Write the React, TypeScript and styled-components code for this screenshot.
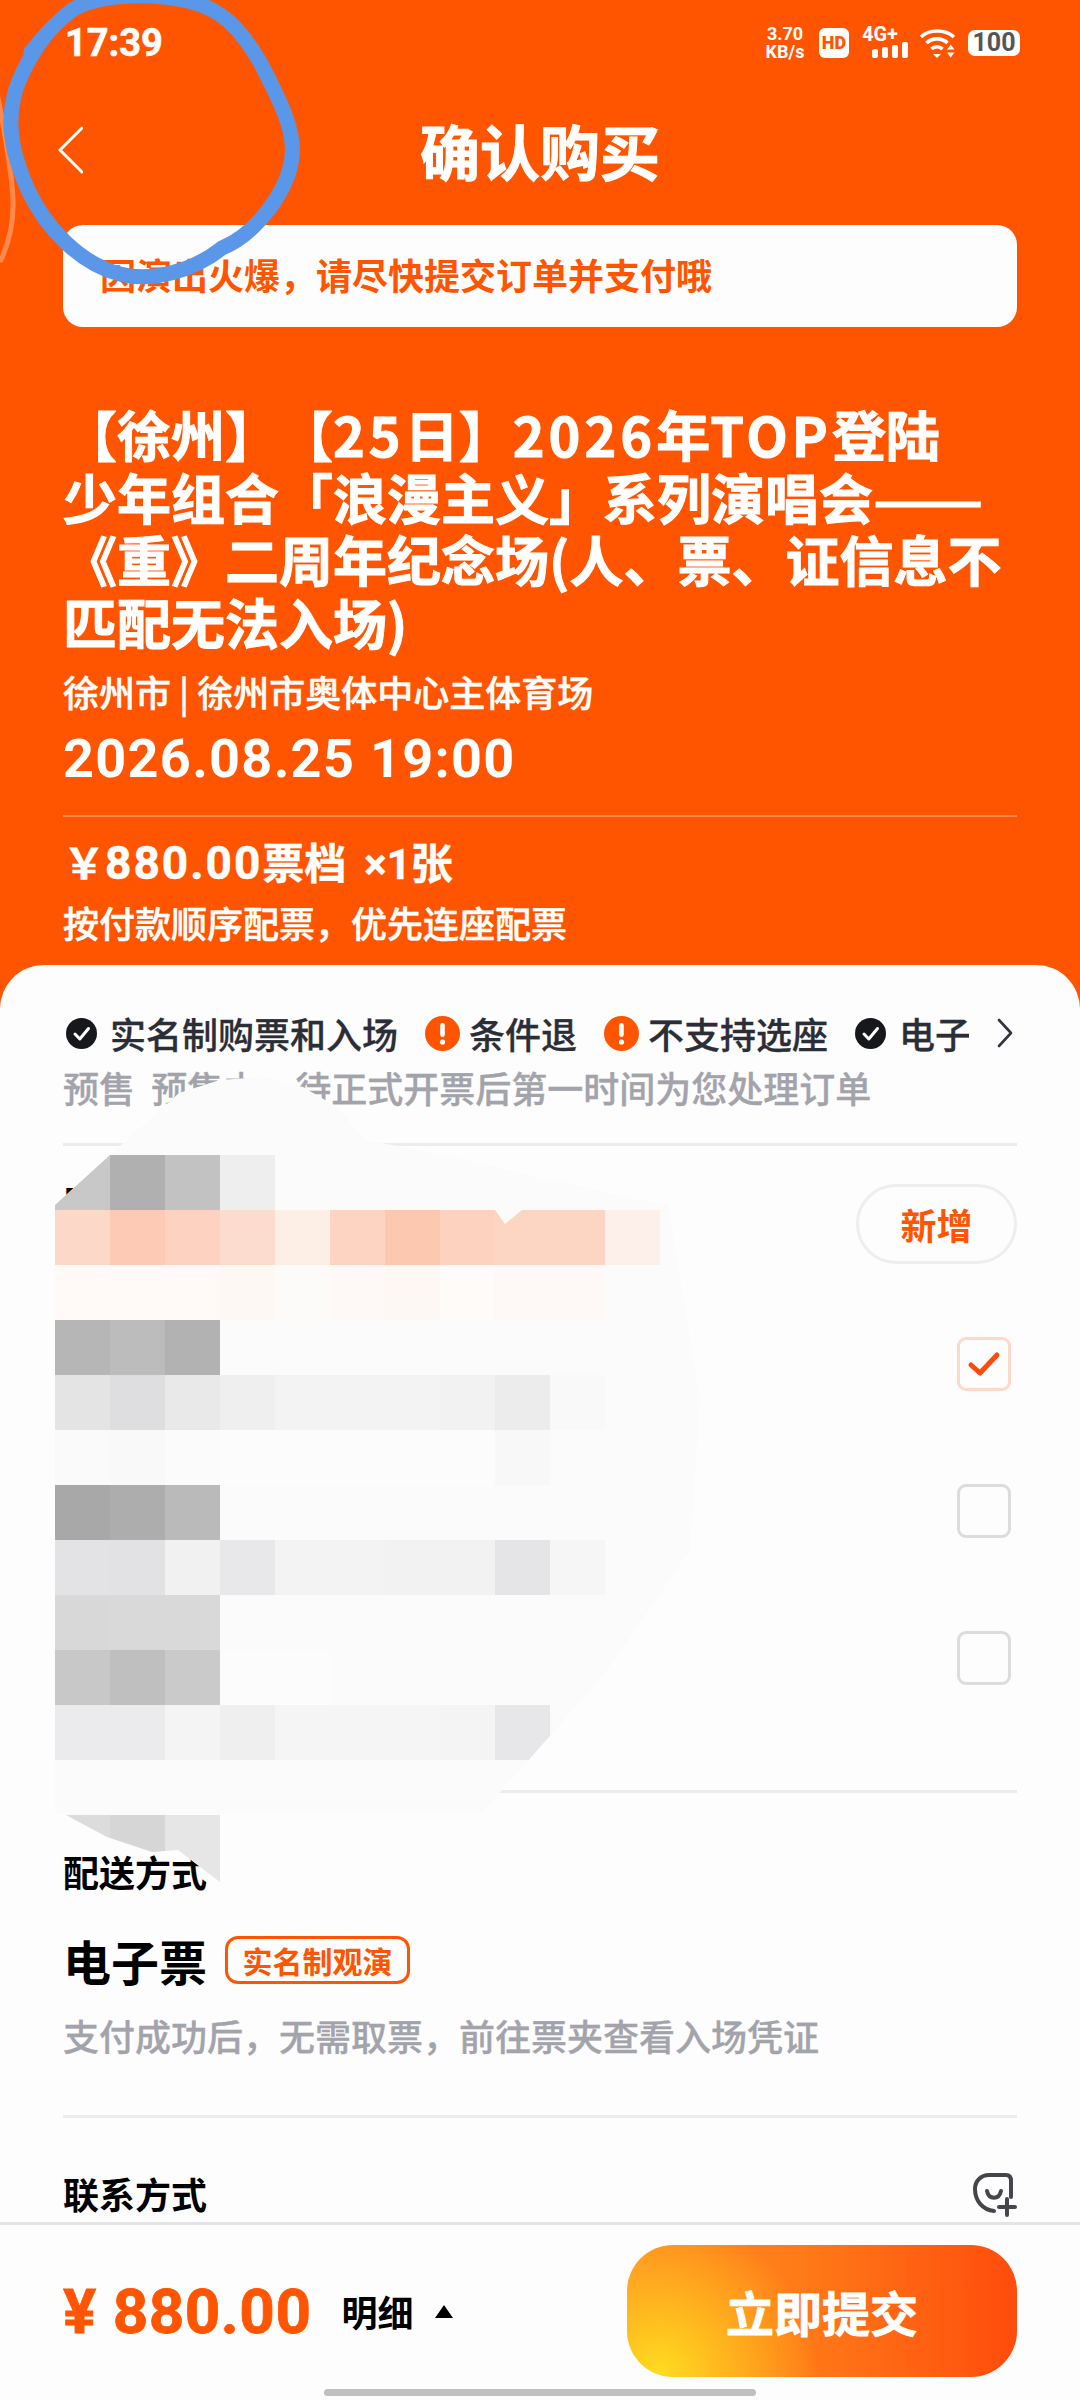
import React from "react";
import styled, { createGlobalStyle } from "styled-components";

const ORANGE = "#ff5500";
const CJK = `"Noto Sans CJK SC", "Noto Sans", sans-serif`;

const Global = createGlobalStyle`
  html, body { margin: 0; padding: 0; background: ${ORANGE}; }
  * { box-sizing: border-box; }
`;

const Page = styled.div`
  position: relative;
  width: 1080px;
  height: 2400px;
  overflow: hidden;
  display: flex;
  flex-direction: column;
  background: ${ORANGE};
  color: #fff;
  font-family: ${CJK};
  text-spacing-trim: space-all;
`;

const StatusBar = styled.div`
  height: 85px;
  padding: 0 60px 0 65px;
  display: flex;
  align-items: center;
  justify-content: space-between;
`;
const Time = styled.span`
  font: 700 38px Roboto, sans-serif;
  -webkit-text-stroke: 0.6px #fff;
`;
const StatusIcons = styled.div`
  display: flex;
  align-items: center;
  gap: 11px;
`;
const Speed = styled.div`
  display: flex;
  flex-direction: column;
  align-items: center;
  width: 46px;
  font: 700 18px/18px Roboto, sans-serif;
`;
const HdBadge = styled.span`
  width: 30px;
  height: 30px;
  border-radius: 6px;
  background: #fff;
  color: ${ORANGE};
  font: 900 18px/30px Roboto, sans-serif;
  text-align: center;
`;
const Signal = styled.div`
  display: flex;
  flex-direction: column;
  width: 46px;
  margin-left: 2px;
  font: 700 20px/15px Roboto, sans-serif;
`;
const Bars = styled.div`
  display: flex;
  align-items: flex-end;
  justify-content: flex-end;
  gap: 4px;
  height: 16px;
`;
const Bar = styled.i<{ $h: number }>`
  width: 6px;
  height: ${(p) => p.$h}px;
  border-radius: 2px;
  background: #fff;
`;
const Battery = styled.div`
  width: 52px;
  height: 26px;
  border-radius: 7px;
  background: #fff;
  color: #555;
  font: 700 25px/26px Roboto, sans-serif;
  text-align: center;
`;

const NavBar = styled.div`
  height: 132px;
  padding: 0 58px 3px;
  display: grid;
  grid-template-columns: 1fr auto 1fr;
  align-items: center;
`;
const Title = styled.h1`
  margin: 0;
  font-size: 60px;
  font-weight: 700;
  line-height: 70px;
  -webkit-text-stroke: 1px #fff;
`;

const Banner = styled.div`
  height: 102px;
  margin: 8px 63px 0;
  padding: 0 0 4px 37px;
  display: flex;
  align-items: center;
  border-radius: 20px;
  background: #fdfdfd;
  color: ${ORANGE};
  font-size: 36px;
  font-weight: 700;
`;

const Info = styled.div`
  margin: 76px 63px 0;
  display: flex;
  flex-direction: column;
`;
const Heading = styled.h2`
  margin: 0 -10px 0 0;
  font-size: 54px;
  font-weight: 700;
  line-height: 62.5px;
  -webkit-text-stroke: 1px #fff;
`;
const Latin = styled.span`
  letter-spacing: 4px;
`;
const Dash = styled.span`
  display: inline-block;
  transform: scaleX(1.2);
  transform-origin: left center;
`;
const Venue = styled.div`
  margin-top: 13px;
  font-size: 36px;
  font-weight: 500;
  line-height: 50px;
  -webkit-text-stroke: 0.5px #fff;
`;
const DateLine = styled.div`
  margin-top: 13px;
  font: 700 54px/60px Roboto, sans-serif;
  letter-spacing: 1.3px;
`;
const InfoRule = styled.div`
  height: 2px;
  margin: 26px 0 16px;
  background: rgba(255, 255, 255, 0.3);
`;
const PriceLine = styled.div`
  display: flex;
  align-items: baseline;
  height: 56px;
  font-size: 42px;
  font-weight: 700;
  line-height: 56px;
  -webkit-text-stroke: 0.5px #fff;
`;
const PriceDigits = styled.span`
  font: 700 46px/56px Roboto, sans-serif;
  letter-spacing: 2px;
`;
const PriceCount = styled.span`
  margin-left: 18px;
  font-family: Roboto, ${CJK};
`;
const SeatNote = styled.div`
  margin-top: 8px;
  font-size: 36px;
  font-weight: 500;
  line-height: 50px;
  -webkit-text-stroke: 0.5px #fff;
`;

const Panel = styled.div`
  flex: 1;
  min-height: 0;
  margin-top: 18px;
  padding: 46px 63px 0;
  overflow: hidden;
  border-radius: 44px 44px 0 0;
  background: #fdfdfd;
  color: #000;
`;
const Tags = styled.div`
  height: 44px;
  display: flex;
  align-items: center;
`;
const TagScroller = styled.div`
  width: 903px;
  overflow: hidden;
  display: flex;
  align-items: center;
  white-space: nowrap;
  margin-left: 3px;
`;
const Tag = styled.div<{ $gap: number }>`
  flex: none;
  display: flex;
  align-items: center;
  gap: ${(p) => p.$gap}px;
  margin-right: 27px;
  color: #2b2e36;
  font-size: 36px;
  font-weight: 500;
  -webkit-text-stroke: 0.3px #2b2e36;
`;
const More = styled.div`
  margin-left: auto;
  margin-right: 4px;
  display: flex;
`;
const Muted = styled.div`
  color: #a3a3ab;
  font-size: 36px;
  font-weight: 500;
  line-height: 50px;
  white-space: pre;
  -webkit-text-stroke: 0.3px #a3a3ab;
`;
const PreSale = styled(Muted)`
  margin-top: 7px;
`;
const Rule = styled.div`
  height: 3px;
  background: #ececec;
`;
const Section = styled.div<{ $pad: string }>`
  padding: ${(p) => p.$pad};
`;
const HeadRow = styled.div`
  height: 80px;
  display: flex;
  justify-content: space-between;
`;
const Label = styled.div`
  font-size: 36px;
  font-weight: 700;
  line-height: 50px;
`;
const HiddenLabel = styled(Label)`
  margin: -8px 0 0 1px;
`;
const AddButton = styled.div`
  width: 161px;
  height: 80px;
  border: 3px solid #eeeeee;
  border-radius: 40px;
  display: flex;
  align-items: center;
  justify-content: center;
  color: ${ORANGE};
  font-size: 36px;
  font-weight: 700;
`;
const PersonRow = styled.div`
  height: 147px;
  padding-right: 6px;
  display: flex;
  align-items: center;
  justify-content: flex-end;
`;
const Check = styled.div<{ $on?: boolean }>`
  width: 54px;
  height: 54px;
  border-radius: 9px;
  border: 3px solid ${(p) => (p.$on ? "#fdd8cb" : "#dcdcdc")};
  display: flex;
  align-items: center;
  justify-content: center;
`;
const Ticket = styled.div`
  margin-top: 34px;
  height: 60px;
  display: flex;
  align-items: center;
  gap: 18px;
`;
const TicketName = styled.span`
  font-size: 48px;
  font-weight: 700;
`;
const TicketTag = styled.span`
  width: 185px;
  height: 48px;
  border: 3px solid ${ORANGE};
  border-radius: 13px;
  display: flex;
  align-items: center;
  justify-content: center;
  color: ${ORANGE};
  font-size: 30px;
  font-weight: 700;
`;
const TicketNote = styled(Muted)`
  margin-top: 20px;
`;
const ContactRow = styled.div`
  display: flex;
  align-items: center;
  justify-content: space-between;
`;
const ContactIcon = styled.svg`
  margin-top: 4px;
`;

const Footer = styled.div`
  height: 178px;
  border-top: 3px solid #e4e4e4;
  background: #fdfdfd;
  display: flex;
  flex-direction: column;
  align-items: center;
`;
const FooterRow = styled.div`
  width: 100%;
  height: 132px;
  margin-top: 20px;
  padding: 0 63px;
  display: flex;
  align-items: center;
`;
const Amount = styled.span`
  color: ${ORANGE};
  font: 700 62px Roboto, sans-serif;
  letter-spacing: 0.5px;
  white-space: pre;
  -webkit-text-stroke: 0.8px ${ORANGE};
`;
const Detail = styled.span`
  margin-left: 30px;
  color: #000;
  font-size: 36px;
  font-weight: 700;
`;
const Caret = styled.i`
  width: 0;
  height: 0;
  margin-left: 21px;
  border-left: 9.5px solid transparent;
  border-right: 9.5px solid transparent;
  border-bottom: 13px solid #000;
`;
const Submit = styled.div`
  width: 390px;
  height: 132px;
  margin-left: auto;
  border-radius: 46px;
  display: flex;
  align-items: center;
  justify-content: center;
  color: #fff;
  font-size: 48px;
  font-weight: 700;
  -webkit-text-stroke: 0.8px #fff;
  background:
    radial-gradient(circle at 8% 98%, #ffdc20 0, rgba(255, 200, 30, 0.85) 14%, rgba(255, 150, 30, 0) 42%),
    linear-gradient(90deg, #ff8a22 0%, #ff7a18 45%, #ff4c0c 100%);
`;
const HomeBar = styled.div`
  width: 432px;
  height: 7px;
  margin-top: 12px;
  border-radius: 4px;
  background: #c0c0c0;
`;

/* Redaction painted over the passenger list in the screenshot */
const Redaction = styled.div`
  position: absolute;
  left: 55px;
  top: 1077px;
  width: 650px;
  height: 805px;
  padding-top: 78px;
  background: #fbfbfb;
  clip-path: polygon(
    207px 0, 248px 10px, 282px 30px, 310px 63px, 379px 76px, 585px 123px, 613px 128px, 645px 323px,
    635px 473px, 552px 594px, 427px 736px, 165px 736px, 165px 805px, 123px 773px, 97px 775px,
    52px 760px, 11px 738px, 0 736px, 0 128px, 55px 78px, 124px 16px, 165px 3px
  );
`;
const PixelRow = styled.div<{ $h?: number }>`
  display: flex;
  height: ${(p) => p.$h ?? 55}px;
`;
const Pixel = styled.i<{ $c: string }>`
  width: 55px;
  background: ${(p) => p.$c};
`;
const Notch = styled.i`
  position: absolute;
  left: 440px;
  top: 133px;
  width: 27px;
  height: 14px;
  background: #fbfbfb;
  clip-path: polygon(0 0, 100% 0, 37% 100%);
`;
const Scribble = styled.svg`
  position: absolute;
  left: 0;
  top: 0;
`;

const PIXELS: string[][] = [
  ["c8c8c8", "b0b0b0", "c2c2c2", "eeeeee"],
  ["fcd8c8", "fdcab5", "fdd2c0", "fcdccf", "fdeee6", "fdd4c2", "fdc8b0", "fdd2be", "fcd5c3", "fcd5c3", "fdf0ea"],
  ["fffaf7", "fffaf7", "fffaf7", "fef8f5", "fdfbf9", "fef9f6", "fef8f5", "fefbf9", "fef9f7", "fef9f7"],
  ["b6b6b6", "bcbcbc", "b2b2b2"],
  ["e4e4e5", "dedee0", "e9e9ea", "efefef", "f3f3f3", "f3f3f3", "f3f3f3", "f2f2f2", "ececec", "f9f9f9"],
  ["fafafa", "f9f9f9", "fbfbfb", "fcfcfc", "fcfcfc", "fcfcfc", "fcfcfc", "fcfcfc", "f8f8f8", "fbfbfb"],
  ["a8a8a8", "adadad", "bababa"],
  ["e3e3e5", "e2e2e4", "f1f1f1", "e8e8ea", "f3f3f3", "f3f3f3", "f2f2f2", "f2f2f2", "e5e5e7", "f6f6f6"],
  ["d8d8d8", "d9d9d9", "d9d9d9"],
  ["c8c8c8", "bfbfbf", "cacaca", "fcfcfc", "fcfcfc", "fbfbfb", "fbfbfb", "fbfbfb", "fbfbfb", "fbfbfb"],
  ["ebebed", "ebebed", "f4f4f4", "efefef", "f5f5f5", "f5f5f5", "f5f5f5", "f4f4f4", "e7e7e9", "fbfbfb"],
  [],
  ["dcdcdc", "d6d6d6", "e6e6e6"],
];

const OkIcon = () => (
  <svg width="31" height="31" viewBox="0 0 31 31">
    <circle cx="15.5" cy="15.5" r="15.5" fill="#17181c" />
    <path d="M9 16l4.8 5L22.5 10.5" fill="none" stroke="#fff" strokeWidth="3" strokeLinecap="round" strokeLinejoin="round" />
  </svg>
);
const WarnIcon = () => (
  <svg width="35" height="35" viewBox="0 0 35 35">
    <circle cx="17.5" cy="17.5" r="17.5" fill={ORANGE} />
    <rect x="15.2" y="7" width="4.6" height="14" rx="2.3" fill="#fff" />
    <circle cx="17.5" cy="26" r="2.6" fill="#fff" />
  </svg>
);

export default function App() {
  return (
    <Page>
      <Global />
      <StatusBar>
        <Time>17:39</Time>
        <StatusIcons>
          <Speed>
            <span>3.70</span>
            <span>KB/s</span>
          </Speed>
          <HdBadge>HD</HdBadge>
          <Signal>
            <span>4G+</span>
            <Bars>
              <Bar $h={9} />
              <Bar $h={11} />
              <Bar $h={13} />
              <Bar $h={16} />
            </Bars>
          </Signal>
          <svg width="38" height="30" viewBox="0 0 38 30" fill="none" stroke="#fff" strokeWidth="3.6">
            <path d="M2 9C10 1 26 1 35 9" />
            <path d="M7.5 15C13 9.5 23 9.5 28.5 15" />
            <path d="M12.5 21C15.5 18 20.5 18 23.5 21" />
            <path d="M14 26l4 4 4-4z" fill="#fff" stroke="none" />
            <path d="M28 21.5l3.7-5 3.7 5zM28 24.5l3.7 5 3.7-5z" fill="#fff" stroke="none" />
          </svg>
          <Battery>100</Battery>
        </StatusIcons>
      </StatusBar>

      <NavBar>
        <svg width="25" height="48" viewBox="0 0 25 48" fill="none" stroke="#fff" strokeWidth="3" strokeLinecap="round" strokeLinejoin="round">
          <path d="M24 2L2 24l22 22" />
        </svg>
        <Title>确认购买</Title>
      </NavBar>

      <Banner>因演出火爆，请尽快提交订单并支付哦</Banner>

      <Info>
        <Heading>
          【徐州】【<Latin>25</Latin>日】<Latin>2026</Latin>年<Latin>TOP</Latin>登陆
          <br />
          少年组合「浪漫主义」系列演唱会<Dash>——</Dash>
          <br />
          《重》二周年纪念场(人、票、证信息不
          <br />
          匹配无法入场)
        </Heading>
        <Venue>徐州市 | 徐州市奥体中心主体育场</Venue>
        <DateLine>2026.08.25 19:00</DateLine>
        <InfoRule />
        <PriceLine>
          ￥<PriceDigits>880.00</PriceDigits>票档
          <PriceCount>×1张</PriceCount>
        </PriceLine>
        <SeatNote>按付款顺序配票，优先连座配票</SeatNote>
      </Info>

      <Panel>
        <Tags>
          <TagScroller>
            <Tag $gap={13}><OkIcon />实名制购票和入场</Tag>
            <Tag $gap={9}><WarnIcon />条件退</Tag>
            <Tag $gap={9}><WarnIcon />不支持选座</Tag>
            <Tag $gap={13}><OkIcon />电子票</Tag>
          </TagScroller>
          <More>
            <svg width="16" height="30" viewBox="0 0 16 30" fill="none" stroke="#33353c" strokeWidth="2.6" strokeLinecap="round" strokeLinejoin="round">
              <path d="M2 2l12 13L2 28" />
            </svg>
          </More>
        </Tags>
        <PreSale>预售  预售中，待正式开票后第一时间为您处理订单</PreSale>
        <Section $pad="31px 0 0">
          <Rule />
        </Section>
        <Section $pad="38px 0 26px">
          <HeadRow>
            <HiddenLabel>购票人</HiddenLabel>
            <AddButton>新增</AddButton>
          </HeadRow>
        </Section>
        <PersonRow>
          <Check $on>
            <svg width="34" height="28" viewBox="0 0 34 28" fill="none" stroke="#ff4a0d" strokeWidth="5" strokeLinecap="round" strokeLinejoin="round">
              <path d="M4 15l9 8L30 5" />
            </svg>
          </Check>
        </PersonRow>
        <PersonRow><Check /></PersonRow>
        <PersonRow><Check /></PersonRow>
        <Section $pad="59px 0 0">
          <Rule />
        </Section>
        <Section $pad="53px 0 0">
          <Label>配送方式</Label>
          <Ticket>
            <TicketName>电子票</TicketName>
            <TicketTag>实名制观演</TicketTag>
          </Ticket>
          <TicketNote>支付成功后，无需取票，前往票夹查看入场凭证</TicketNote>
        </Section>
        <Section $pad="55px 0 0">
          <Rule />
        </Section>
        <Section $pad="50px 0 0">
          <ContactRow>
            <Label>联系方式</Label>
            <ContactIcon width="44" height="44" viewBox="0 0 44 44" fill="none" stroke="#44464c" strokeWidth="4" strokeLinecap="round" strokeLinejoin="round">
              <path d="M38 24V8Q38 2 33 2H16C8 2 2 8 2 16C2 28 10 37 21 38" />
              <path d="M14 18C16 27 26 27 28 18" />
              <path d="M26 34H42M34 26V42" />
            </ContactIcon>
          </ContactRow>
        </Section>
      </Panel>

      <Footer>
        <FooterRow>
          <Amount>¥ 880.00</Amount>
          <Detail>明细</Detail>
          <Caret />
          <Submit>立即提交</Submit>
        </FooterRow>
        <HomeBar />
      </Footer>

      <Redaction>
        {PIXELS.map((row, i) => (
          <PixelRow key={i} $h={i === 12 ? 67 : 55}>
            {row.map((c, j) => (
              <Pixel key={j} $c={`#${c}`} />
            ))}
          </PixelRow>
        ))}
        <Notch />
      </Redaction>

      <Scribble width="310" height="290" viewBox="0 0 310 290" fill="none">
        <path d="M-2 97C4 130 12 170 13 200C14 225 8 245 0 262" stroke="rgba(255,255,255,0.3)" strokeWidth="5" />
        <path
          d="M31 52C42 38 56 22 72 10C98 -6 150 -8 192 2C222 10 240 28 260 62C282 104 295 132 292 156C289 190 256 234 222 248C192 272 150 282 120 274C80 264 46 228 28 190C14 158 6 128 14 96C18 78 34 48 50 30"
          stroke="#5b97e8"
          strokeWidth="15"
          strokeLinecap="round"
          strokeLinejoin="round"
        />
      </Scribble>
    </Page>
  );
}
